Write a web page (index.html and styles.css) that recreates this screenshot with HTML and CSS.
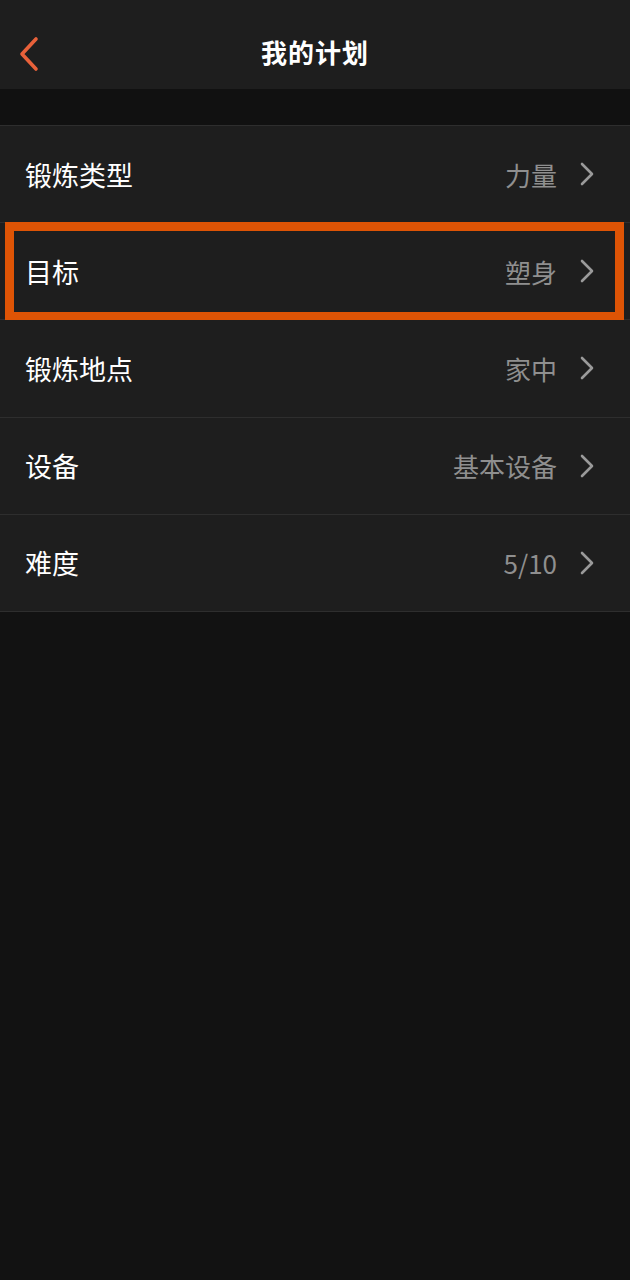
FILE: index.html
```html
<!DOCTYPE html>
<html>
<head>
    <title>我的计划</title>
    <meta charset="utf-8">
    <link rel="stylesheet" href="styles.css">
</head>
<body>
    <div class="topbar">
        <a class="back" href="#">
            <svg width="24" height="36" viewBox="0 0 24 36"><path d="M19 3 L5 18 L19 33" fill="none" stroke="#e8613a" stroke-width="3.6" stroke-linecap="round" stroke-linejoin="round"/></svg>
        </a>
        <h1>我的计划</h1>
    </div>

    <div class="spacer"></div>

    <ul class="plan-list">
        <li class="plan-row">
            <span class="label">锻炼类型</span>
            <span class="value">力量</span>
            <svg class="chevron" width="16" height="24" viewBox="0 0 16 24"><path d="M3 2 L13 12 L3 22" fill="none" stroke="#9a9a9a" stroke-width="2.6" stroke-linecap="round" stroke-linejoin="round"/></svg>
        </li>
        <li class="plan-row">
            <span class="label">目标</span>
            <span class="value">塑身</span>
            <svg class="chevron" width="16" height="24" viewBox="0 0 16 24"><path d="M3 2 L13 12 L3 22" fill="none" stroke="#9a9a9a" stroke-width="2.6" stroke-linecap="round" stroke-linejoin="round"/></svg>
            <span class="highlight"></span>
        </li>
        <li class="plan-row">
            <span class="label">锻炼地点</span>
            <span class="value">家中</span>
            <svg class="chevron" width="16" height="24" viewBox="0 0 16 24"><path d="M3 2 L13 12 L3 22" fill="none" stroke="#9a9a9a" stroke-width="2.6" stroke-linecap="round" stroke-linejoin="round"/></svg>
        </li>
        <li class="plan-row">
            <span class="label">设备</span>
            <span class="value">基本设备</span>
            <svg class="chevron" width="16" height="24" viewBox="0 0 16 24"><path d="M3 2 L13 12 L3 22" fill="none" stroke="#9a9a9a" stroke-width="2.6" stroke-linecap="round" stroke-linejoin="round"/></svg>
        </li>
        <li class="plan-row">
            <span class="label">难度</span>
            <span class="value">5/10</span>
            <svg class="chevron" width="16" height="24" viewBox="0 0 16 24"><path d="M3 2 L13 12 L3 22" fill="none" stroke="#9a9a9a" stroke-width="2.6" stroke-linecap="round" stroke-linejoin="round"/></svg>
        </li>
    </ul>
</body>
</html>
```

FILE: styles.css
```css
* {
    box-sizing: border-box;
}

html, body {
    min-height: 100vh;
    margin: 0;
    padding: 0;
    background: #121212;
    font-family: "Noto Sans CJK SC", "Noto Sans", sans-serif;
    color: #fff;
}

.topbar {
    position: relative;
    display: flex;
    align-items: center;
    justify-content: center;
    height: 89px;
    padding-top: 14px;
    background: #1e1e1e;
}

.back {
    position: absolute;
    left: 17px;
    top: 36px;
    display: block;
    line-height: 0;
}

.topbar h1 {
    margin: 0;
    font-size: 26px;
    font-weight: 700;
    letter-spacing: 1px;
    color: #fff;
}

.spacer {
    height: 36px;
    background: #111;
}

.plan-list {
    list-style: none;
    margin: 0;
    padding: 0;
    border-top: 1px solid #2e2e2e;
}

.plan-row {
    position: relative;
    display: flex;
    align-items: center;
    height: 97.2px;
    padding: 0 35px 0 25px;
    background: #1e1e1e;
    border-bottom: 1px solid #2e2e2e;
}

.label {
    flex: 1;
    font-size: 27px;
    color: #fff;
}

.value {
    font-size: 26px;
    color: #8f8f8f;
}

.chevron {
    margin-left: 22px;
}

.highlight {
    position: absolute;
    top: -1px;
    left: 5px;
    right: 6px;
    bottom: -2px;
    border: 9px solid #de5405;
}
```
